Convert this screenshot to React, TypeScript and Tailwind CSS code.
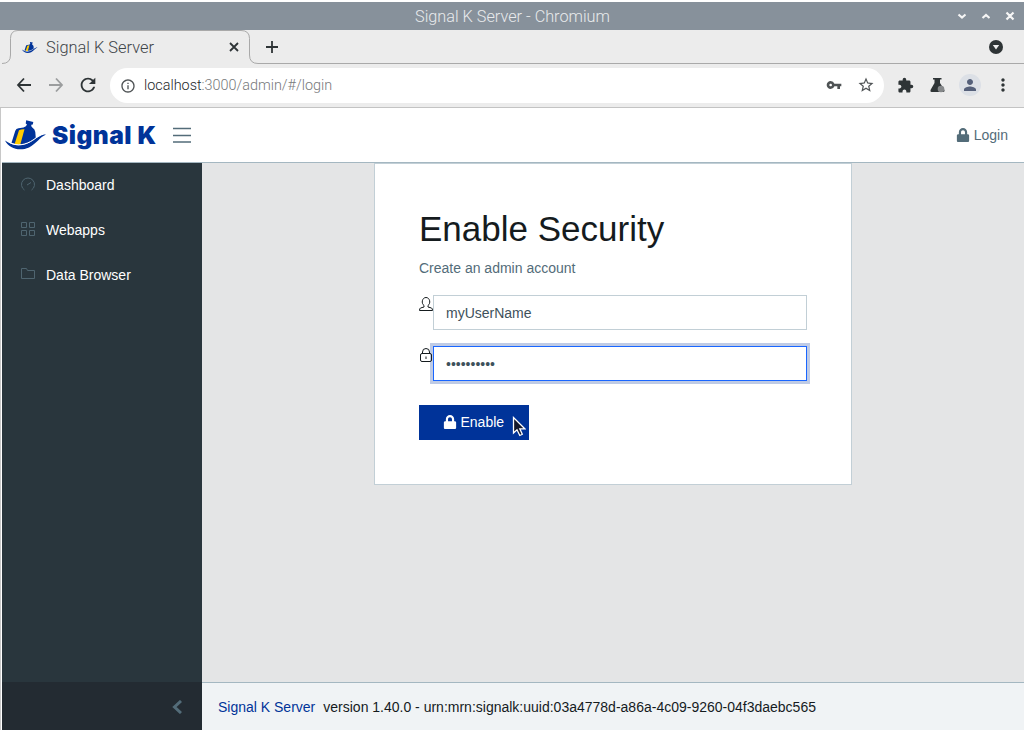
import React from "react";
import {
  MdRefresh, MdInfoOutline, MdVpnKey, MdStarBorder,
  MdExtension, MdMoreVert, MdPerson,
} from "react-icons/md";
import { FaLock } from "react-icons/fa";

function Ship({ className }: { className: string }) {
  return (
    <svg className={className} viewBox="0 0 42 30">
      <path fill="#003399" d="M6.500 22.800L10.300 10.800Q11 8.500 13.500 8.200L18.500 7.600Q21.500 6.500 22 4.500L20.700 3.500L21.200 .3L28.300 2L27.800 4.500L26.300 4.800Q25.800 6.300 27.300 7.500Q30 9 30.300 12L30.800 18.500C24 23.500 15 26.500 6.500 22.800Z" />
      <path fill="#ffcc00" d="M14 10.200Q16.500 9 19.500 9.300L15.300 24.500L9.600 24Z" />
      <path fill="#003399" d="M0 20.500C9 27.500 20 26 28 20.500C33 17 36 14.500 41 14.500C35 17 31 24 24 27.500C15 31.500 4 29 0 20.500Z" />
      <path fill="none" stroke="#fff" strokeWidth="1" d="M4 22.300C12 26.800 21 24.800 28 20C31 18 33 16.300 36 14.800" />
    </svg>
  );
}

function Stroke({ className, d }: { className: string; d: string }) {
  return (
    <svg className={className} viewBox="0 0 20 20" fill="none" stroke="currentColor" strokeWidth="1.800">
      <path d={d} />
    </svg>
  );
}

function Titlebar() {
  return (
    <div className="mt-0.5 h-7 shrink-0 bg-[#87919b] relative flex items-center justify-center pl-px font-[Roboto] font-light text-[16.250px] text-[#e8eaec]">
      <span>Signal K Server - Chromium</span>
      <svg className="absolute right-2 top-2 h-3 w-16" viewBox="0 0 64 12" fill="none" stroke="#f5f5f5" strokeWidth="2.200">
        <path d="M6.500 4.500L10 7.500L13.500 4.500M30.500 8L34 5L37.500 8M54.500 2.500L61.500 9.500M61.500 2.500L54.500 9.500" />
      </svg>
    </div>
  );
}

function Tabs() {
  return (
    <div className="relative h-[34px] shrink-0 bg-[#ececec]">
      <svg className="absolute inset-0 h-[34px] w-full" width="1024" height="34" fill="none" stroke="#a9a9a9">
        <path d="M2 33.500Q10.500 33.500 10.500 25V8.500Q10.500 .5 18 .5H241Q249.500 .5 249.500 8.500V25Q249.500 33.500 258 33.500H1024" />
      </svg>
      <div className="relative flex h-[34px] items-center pl-[22px] font-[Roboto] font-light text-[16.400px] text-[#3f4549]">
        <Ship className="h-[13px] w-4" />
        <span className="ml-2 w-[178px]">Signal K Server</span>
        <Stroke className="size-5 text-[#2e3436]" d="M6 6L14 14M14 6L6 14" />
        <Stroke className="ml-[18px] size-5 text-[#2e3436]" d="M10 4V16M4 10H16" />
        <svg className="ml-auto mr-[21px] size-[14px]" viewBox="0 0 14 14">
          <circle cx="7" cy="7" r="7" fill="#2e3436" />
          <path fill="#eee" d="M3.800 5H10.200L7 9.500Z" />
        </svg>
      </div>
    </div>
  );
}

function Toolbar() {
  return (
    <div className="flex h-[44px] shrink-0 items-center border-b border-[#c3c3c3] bg-[#ececec] pl-[14px] text-[#2e3436]">
      <Stroke className="-mt-px size-5" d="M10 3.500L4 10L10 16.500M4 10H17" />
      <Stroke className="-mt-px ml-3 size-5 text-[#9b9d9e]" d="M10 3.500L16 10L10 16.500M16 10H3" />
      <MdRefresh className="-mt-px ml-[11px] size-[22px]" />
      <div className="ml-[11px] flex h-[35px] w-[774px] items-center rounded-full bg-white pl-[10px] pr-[9px] text-[#4f5355]">
        <MdInfoOutline className="size-4" />
        <div className="ml-2 font-[Roboto] font-light text-[14.400px] text-[#77797b]">
          <span className="text-[#24282a]">localhost</span>:3000/admin/#/login
        </div>
        <MdVpnKey className="-mt-0.5 ml-auto size-4" />
        <MdStarBorder className="-mt-px ml-[15px] size-[18px]" />
      </div>
      <MdExtension className="-mt-px ml-[13px] size-[17px]" />
      <svg className="ml-[16px] -mt-px h-4 w-[17px]" viewBox="0 0 17 16">
        <path fill="#2e3436" d="M3 1H11.500V2.500H10V6L14.500 13Q15 15 13 15H1.500Q0 15 .5 13L4.500 6V2.500H3Z" />
        <circle cx="11" cy="12" r="3.300" fill="#85888a" />
      </svg>
      <div className="ml-[12px] -mt-0.5 flex size-[22px] items-center justify-center rounded-full bg-[#dce0e6] text-[#55607a]">
        <MdPerson className="size-[18px]" />
      </div>
      <MdMoreVert className="-mt-px ml-[12px] size-5" />
    </div>
  );
}

function Header() {
  return (
    <header className="flex h-[55px] shrink-0 items-center border-b border-[#a4b7c1] bg-white pl-[3px] pr-4">
      <Ship className="-mt-px h-[30px] w-[42px]" />
      <div className="ml-[5px] w-[105px] whitespace-nowrap">
        <span className="-mt-px block font-[Inter] text-[24.500px] font-black leading-[30px] tracking-[0.480px] text-[#003399]">Signal K</span>
      </div>
      <svg className="ml-4 h-4 w-[18px]" viewBox="0 0 18 16" stroke="#536c79" strokeWidth="1.400">
        <path d="M0 1.500H18M0 8.500H18M0 15H18" />
      </svg>
      <div className="ml-auto flex items-center gap-[3.500px] text-[#536c79]">
        <FaLock className="size-[14px] -mt-px" />
        <span>Login</span>
      </div>
    </header>
  );
}

function Sidebar() {
  const ic = "size-[14px] -mt-[3px] fill-none stroke-[#4f6570]";
  return (
    <aside className="flex w-[200px] shrink-0 flex-col bg-[#29363d] text-white">
      <a className="flex h-[45px] items-center gap-[11px] pl-[19px]">
        <svg className={ic} viewBox="0 0 14 14">
          <path d="M3.500 13A6.500 6.500 0 1 1 10.500 13M6 8L10 5.500" />
        </svg>
        Dashboard
      </a>
      <a className="flex h-[45px] items-center gap-[11px] pl-[19px]">
        <svg className={ic} viewBox="0 0 14 14">
          <path d="M.5 .5H5.500V5.500H.5ZM8.500 .5H13.500V5.500H8.500ZM.5 8.500H5.500V13.500H.5ZM8.500 8.500H13.500V13.500H8.500Z" />
        </svg>
        Webapps
      </a>
      <a className="flex h-[45px] items-center gap-[11px] pl-[19px]">
        <svg className={ic} viewBox="0 0 14 14">
          <path d="M.5 1.500V11.500H13.500V3.500H6.500L5.500 1.500Z" />
        </svg>
        Data Browser
      </a>
      <div className="mt-auto flex h-12 items-center justify-end bg-[#232b32] pr-5 pt-px">
        <svg className="h-[14px] w-[10px] fill-none stroke-[#536c79] stroke-3" viewBox="0 0 10 14">
          <path d="M9 1L2.500 7L9 13" />
        </svg>
      </div>
    </aside>
  );
}

function LoginCard() {
  const ic = "relative z-10 size-[14px] shrink-0 fill-none stroke-[#151b1e]";
  return (
    <section className="h-[322px] w-[478px] border border-[#c2cfd6] bg-white pl-11 pr-11 pt-[44px]">
      <h1 className="text-[35px] leading-[42px] text-[#151b1e]">Enable Security</h1>
      <p className="mt-[8px] leading-[21px] text-[#536c79]">Create an admin account</p>
      <div className="mt-[16px] flex items-start">
        <svg className={ic + " mt-[2px]"} viewBox="0 0 14 14">
          <path d="M5 8.500C2 6.500 3 .5 7 .5S12 6.500 9 8.500V10L12.500 11Q13.500 11.500 13.500 13.500H.5Q.5 11.500 1.500 11L5 10Z" />
        </svg>
        <div className="flex h-[35px] flex-1 items-center border border-[#c2cfd6] pl-3 pt-px text-[#3e515b]">myUserName</div>
      </div>
      <div className="mt-4 flex items-start">
        <svg className={ic + " mt-[2px]"} viewBox="0 0 14 14">
          <rect x="1.500" y="5.500" width="11" height="8" rx="1.500" />
          <path d="M3.500 5.500V4Q3.500 .5 7 .5T10.500 4V5.500M7 8.500V11" />
        </svg>
        <div className="flex h-[35px] flex-1 items-center border border-[#1a66ff] pl-3 pt-px text-[#3e515b] shadow-[0_0_0_3px_#bfcbe5]">••••••••••</div>
      </div>
      <button className="relative mt-6 flex h-[35px] w-[110px] items-center gap-[3.500px] bg-[#003399] pl-6 text-white">
        <FaLock className="size-[14px] -mt-px" />
        <span>Enable</span>
        <svg className="absolute left-[93px] top-[11px] h-[21px] w-[14px]" viewBox="0 0 14 21">
          <path fill="#14182c" stroke="#fff" strokeWidth="1.300" d="M1.500 1.500V17L5 13.800L7.800 19.500L10.300 18.300L7.800 12.800H12.800Z" />
        </svg>
      </button>
    </section>
  );
}

export default function App() {
  return (
    <div className="flex h-[732px] w-[1024px] flex-col overflow-hidden bg-white pb-0.5 font-['Liberation_Sans',sans-serif] text-[14px] leading-[21px]">
      <Titlebar />
      <Tabs />
      <Toolbar />
      <div className="flex min-h-0 flex-1 flex-col border-l border-[#c8c8c8] pl-px">
        <Header />
        <div className="flex min-h-0 flex-1">
          <Sidebar />
          <div className="flex flex-1 flex-col bg-[#e4e5e6]">
            <main className="flex flex-1 justify-center">
              <LoginCard />
            </main>
            <footer className="flex h-12 items-center border-t border-[#a4b7c1] bg-[#f0f3f5] pl-4 pt-px text-[#151b1e]">
              <span className="mr-2 text-[#003399]">Signal K Server</span>
              <span>version 1.40.0 - urn:mrn:signalk:uuid:03a4778d-a86a-4c09-9260-04f3daebc565</span>
            </footer>
          </div>
        </div>
      </div>
    </div>
  );
}
